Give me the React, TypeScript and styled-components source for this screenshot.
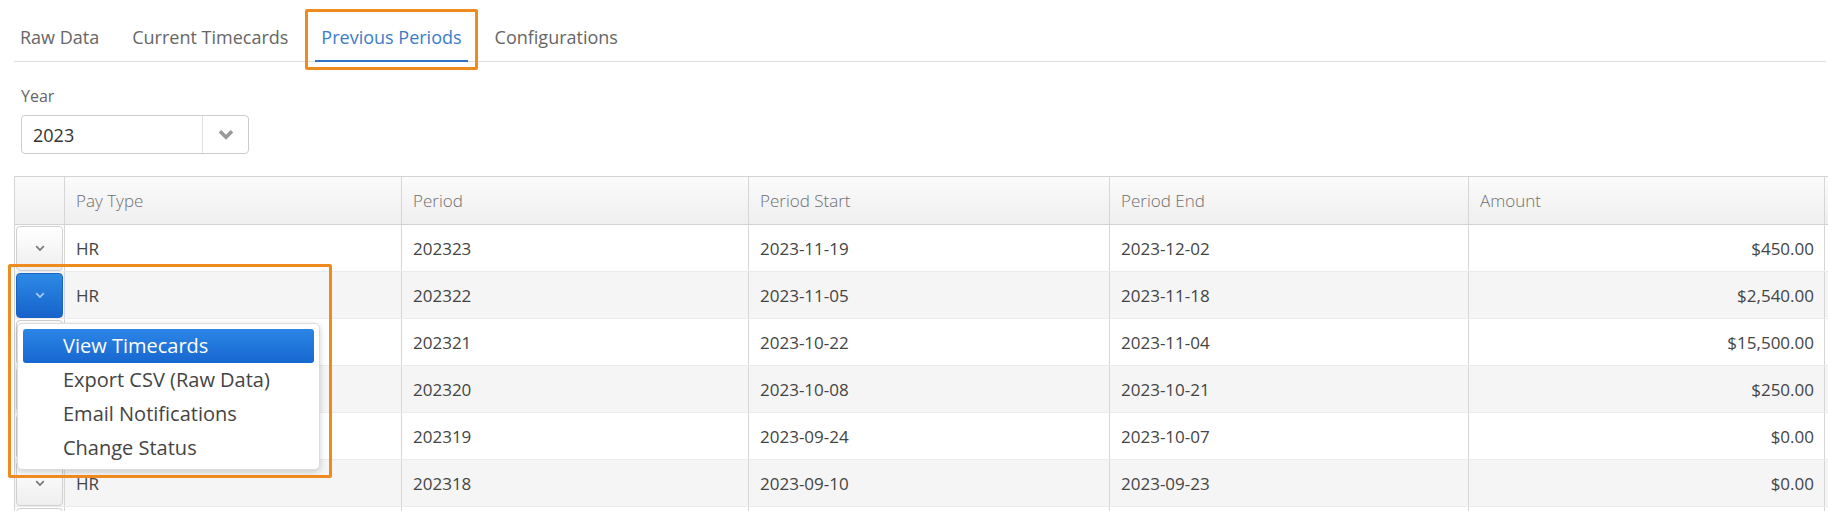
import styled, { createGlobalStyle } from 'styled-components';

const GlobalStyle = createGlobalStyle`
    html, body {
        margin: 0;
        padding: 0;
        overflow: hidden;
        background: #fff;
    }
    body {
        font-family: "Open Sans", "Liberation Sans", sans-serif;
        color: #444;
    }
    * {
        box-sizing: border-box;
    }
`

const tabs = ['Raw Data', 'Current Timecards', 'Previous Periods', 'Configurations']
const activeTab = 'Previous Periods'

const columns = ['', 'Pay Type', 'Period', 'Period Start', 'Period End', 'Amount', 'Status']

const rows = [
    {type: 'HR', period: '202323', start: '2023-11-19', end: '2023-12-02', amount: '$450.00'},
    {type: 'HR', period: '202322', start: '2023-11-05', end: '2023-11-18', amount: '$2,540.00'},
    {type: 'HR', period: '202321', start: '2023-10-22', end: '2023-11-04', amount: '$15,500.00'},
    {type: 'HR', period: '202320', start: '2023-10-08', end: '2023-10-21', amount: '$250.00'},
    {type: 'HR', period: '202319', start: '2023-09-24', end: '2023-10-07', amount: '$0.00'},
    {type: 'HR', period: '202318', start: '2023-09-10', end: '2023-09-23', amount: '$0.00'},
    {type: 'HR', period: '202317', start: '2023-08-27', end: '2023-09-09', amount: '$0.00'},
]

const menuItems = ['View Timecards', 'Export CSV (Raw Data)', 'Email Notifications', 'Change Status']

const openRow = 1

const SmallChevron = ({color}: {color: string}) => (
    <svg width="10" height="7" viewBox="0 0 10 7">
        <polyline points="1.2,1.2 5,5 8.8,1.2" fill="none" stroke={color} strokeWidth="1.7"/>
    </svg>
)

const BoldChevron = () => (
    <svg width="16" height="11" viewBox="0 0 16 11">
        <polyline points="2,2.2 8,8.2 14,2.2" fill="none" stroke="#999" strokeWidth="3.6"/>
    </svg>
)

export default function App() {
    return (
        <Page>
            <GlobalStyle/>
            <TabBar>
                {tabs.map(t => (
                    <Tab key={t} active={t === activeTab}>
                        {t}
                        {t === activeTab && <TabHighlight/>}
                    </Tab>
                ))}
            </TabBar>

            <FormGroup>
                <Label>Year</Label>
                <Select>
                    <SelectValue>2023</SelectValue>
                    <SelectArrow><BoldChevron/></SelectArrow>
                </Select>
            </FormGroup>

            <Grid>
                <HeaderRow>
                    {columns.map((c, i) => (
                        <HeaderCell key={i}>{c}</HeaderCell>
                    ))}
                </HeaderRow>
                {rows.map((r, i) => (
                    <Row key={r.period} striped={i % 2 === 1}>
                        <ActionCell>
                            <RowButton open={i === openRow}>
                                <SmallChevron color={i === openRow ? '#a9cdf5' : '#777'}/>
                            </RowButton>
                            {i === openRow && (
                                <>
                                    <Menu>
                                        {menuItems.map((m, j) => (
                                            <MenuItem key={m} selected={j === 0}>{m}</MenuItem>
                                        ))}
                                    </Menu>
                                    <MenuHighlight/>
                                </>
                            )}
                        </ActionCell>
                        <Cell>{r.type}</Cell>
                        <Cell>{r.period}</Cell>
                        <Cell>{r.start}</Cell>
                        <Cell>{r.end}</Cell>
                        <Cell align="right">{r.amount}</Cell>
                        <Cell>Closed</Cell>
                    </Row>
                ))}
            </Grid>
        </Page>
    )
}

const Page = styled.div`
    width: 100vw;
    height: 100vh;
    overflow: hidden;
`

const TabBar = styled.div`
    display: flex;
    gap: 21px;
    margin: 0 2px 0 14px;
    border-bottom: 1px solid #dedede;
`

const Tab = styled.div<{active?: boolean}>`
    position: relative;
    height: 62px;
    margin-bottom: -1px;
    padding: 25px 6px 0;
    font-size: 18px;
    line-height: 24px;
    color: ${p => (p.active ? '#3b7cc9' : '#666')};
    border-bottom: 2px solid ${p => (p.active ? '#2f74c6' : 'transparent')};
    white-space: nowrap;
`

const TabHighlight = styled.span`
    position: absolute;
    left: -10px;
    right: -10px;
    top: 9px;
    height: 61px;
    border: 3px solid #ef8a1f;
    border-radius: 2px;
    pointer-events: none;
`

const FormGroup = styled.div`
    padding: 23px 0 0 21px;
`

const Label = styled.div`
    font-size: 16px;
    line-height: 22px;
    color: #666;
    margin-bottom: 8px;
`

const Select = styled.div`
    display: flex;
    width: 228px;
    height: 39px;
    border: 1px solid #ccc;
    border-radius: 4px;
    background: #fff;
`

const SelectValue = styled.div`
    flex: 1;
    display: flex;
    align-items: center;
    padding-left: 11px;
    font-size: 18px;
    color: #333;
`

const SelectArrow = styled.div`
    width: 46px;
    display: flex;
    align-items: center;
    justify-content: center;
    border-left: 1px solid #e2e2e2;
`

const template = '50px 337px 347px 361px 359px 356px 200px'

const Grid = styled.div`
    margin: 22px 0 0 14px;
    width: max-content;
    border-top: 1px solid #d4d4d4;
    border-left: 1px solid #d4d4d4;
`

const HeaderRow = styled.div`
    display: grid;
    grid-template-columns: ${template};
    height: 48px;
    border-bottom: 1px solid #d2d2d2;
    background: linear-gradient(#fbfbfb, #efefef);
`

const HeaderCell = styled.div`
    display: flex;
    align-items: center;
    padding: 0 11px;
    border-right: 1px solid #d6d6d6;
    font-size: 17px;
    font-weight: 300;
    color: #6f6f6f;
`

const Row = styled.div<{striped?: boolean}>`
    display: grid;
    grid-template-columns: ${template};
    height: 47px;
    border-bottom: 1px solid #ebebeb;
    background: ${p => (p.striped ? '#f5f5f5' : '#fff')};
`

const Cell = styled.div<{align?: 'left' | 'right'}>`
    display: flex;
    align-items: center;
    justify-content: ${p => (p.align === 'right' ? 'flex-end' : 'flex-start')};
    padding: ${p => (p.align === 'right' ? '0 10px 0 11px' : '0 11px')};
    border-right: 1px solid #d6d6d6;
    font-size: 17px;
    color: #444;
    white-space: nowrap;
`

const ActionCell = styled.div`
    position: relative;
    display: flex;
    align-items: center;
    padding: 0 1px;
    border-right: 1px solid #d6d6d6;
`

const RowButton = styled.div<{open?: boolean}>`
    width: 100%;
    height: 45px;
    display: flex;
    align-items: center;
    justify-content: center;
    border-radius: 4px;
    border: 1px solid ${p => (p.open ? '#1a64c4' : '#cfcfcf')};
    background: ${p => (p.open
        ? 'linear-gradient(#2d8ae6, #1663cb)'
        : 'linear-gradient(#ffffff, #eeeeee)')};
`

const Menu = styled.div`
    position: absolute;
    z-index: 5;
    left: 2px;
    top: calc(100% + 5px);
    width: 303px;
    padding: 5px 5px 4px 5px;
    background: #fff;
    border: 1px solid #dcdcdc;
    border-radius: 5px;
    box-shadow: 0 2px 6px rgba(0, 0, 0, 0.18);
`

const MenuItem = styled.div<{selected?: boolean}>`
    height: 34px;
    line-height: 34px;
    padding-left: 40px;
    font-size: 20px;
    border-radius: 3px;
    white-space: nowrap;
    color: ${p => (p.selected ? '#fff' : '#444')};
    background: ${p => (p.selected ? 'linear-gradient(#2c86e6, #1767d0)' : 'transparent')};
`

const MenuHighlight = styled.div`
    position: absolute;
    z-index: 6;
    left: -7px;
    top: -8px;
    width: 324px;
    height: 214px;
    border: 3px solid #ef8a1f;
    border-radius: 2px;
    pointer-events: none;
`
